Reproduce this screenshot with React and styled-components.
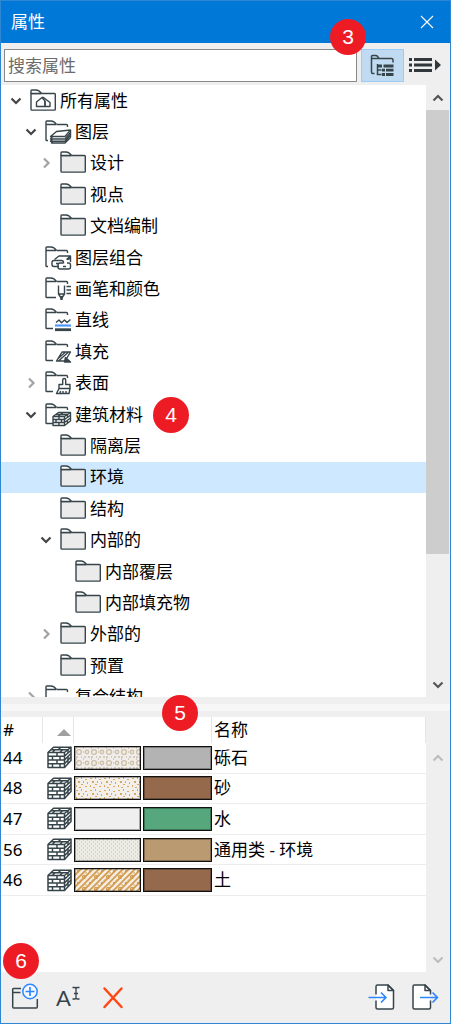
import { useState } from 'react';
import styled, { createGlobalStyle, css } from 'styled-components';

const INK = '#37454b';
const BLUE = '#2f86ff';

const GlobalStyle = createGlobalStyle`
  * {
    box-sizing: border-box;
  }

  body {
    margin: 0;
    color: #000;
    font-family: 'Noto Sans', 'Noto Sans CJK SC', sans-serif;
    font-size: 17px;
    line-height: 24px;
  }

  button, input {
    font: inherit;
    color: inherit;
  }

  svg {
    display: block;
    flex: none;
  }
`;

const Window = styled.main`
  display: flex;
  flex-direction: column;
  min-height: 100vh;
  background: #efefef;
  border: 1px solid #2f86d3;
`;

const TitleBar = styled.header`
  display: flex;
  align-items: center;
  justify-content: space-between;
  height: 42px;
  padding: 0 8px 0 10px;
  background: #0078d7;
  color: #fff;
`;

const Title = styled.h1`
  margin: 0;
  font-size: 17px;
  font-weight: 400;
`;

const IconButton = styled.button`
  display: flex;
  align-items: center;
  justify-content: center;
  flex: none;
  width: ${props => props.$width || 30}px;
  height: 33px;
  padding: 0;
  border: 1px solid ${props => props.$active ? '#99cdf6' : 'transparent'};
  background: ${props => props.$active ? '#c0dbf1' : 'transparent'};
`;

const Toolbar = styled.div`
  position: relative;
  display: flex;
  align-items: center;
  gap: 4px;
  height: 42px;
  padding: 2px 8px 0 3px;
`;

const SearchInput = styled.input`
  flex: 1;
  min-width: 0;
  height: 33px;
  padding: 0 3px;
  border: 1px solid #8a8a8a;
  background: #fff;
  outline: 0;

  &::placeholder {
    color: #6b6b6b;
    opacity: 1;
  }
`;

const Badge = styled.span`
  display: flex;
  align-items: center;
  justify-content: center;
  width: 36px;
  height: 36px;
  margin: ${props => props.$over ? '0' : '-6px 0'};
  border-radius: 50%;
  background: #ed1c24;
  color: #fff;
  font-family: 'Liberation Sans', Arial, sans-serif;
  font-size: 21px;
  z-index: 2;
  ${props => props.$over && css`
    position: absolute;
    left: ${props.$left || 'auto'};
    right: ${props.$right || 'auto'};
    top: ${props.$top};
  `}
`;

const Pane = styled.section`
  display: flex;
  flex: ${props => props.$grow} 1 0;
  min-height: 0;
`;

const PaneBody = styled.div`
  flex: 1;
  min-width: 0;
  height: 0;
  min-height: 100%;
  overflow: hidden;
  background: #fff;
`;

const Tree = styled.ul`
  display: grid;
  grid-auto-rows: 1fr;
  min-height: 628px;
  margin: 0;
  padding: 0;
  list-style: none;
`;

const TreeRow = styled.li`
  display: flex;
  align-items: center;
  padding-left: ${props => 9 + props.$depth * 15}px;
  background: ${props => props.$selected ? '#cde8ff' : 'transparent'};
  white-space: nowrap;
`;

const Expander = styled.button`
  display: flex;
  justify-content: center;
  width: 12px;
  margin-right: 8px;
  padding: 0;
  border: 0;
  background: none;
`;

const ExpanderSpace = styled.span`
  width: 20px;
`;

const TreeLabel = styled.span`
  margin: 0 10px 0 3px;
`;

const ScrollTrack = styled.div`
  display: flex;
  flex-direction: column;
  width: 24px;
  padding-right: 1px;
  padding-top: ${props => props.$offset || 0}px;
`;

const ScrollButton = styled.button`
  display: flex;
  align-items: center;
  justify-content: center;
  height: 25px;
  padding: 0;
  border: 0;
  background: none;
`;

const ScrollRoom = styled.div`
  display: flex;
  flex-direction: column;
  flex: 1;
`;

const Thumb = styled.div`
  height: 79%;
  background: #cdcdcd;
`;

const Splitter = styled.div`
  position: relative;
  height: 20px;
  border: solid #efefef;
  border-width: 7px 0 6px;
  background: #f7f7f7;
`;

const Table = styled.table`
  width: 100%;
  height: 179px;
  table-layout: fixed;
  border-collapse: separate;
  border-spacing: 0;
  white-space: nowrap;
`;

const HeadCell = styled.th`
  width: ${props => props.$width || 'auto'};
  height: 26px;
  padding: 0 2px;
  border-right: 1px solid #e5e5e5;
  font-weight: 400;
  text-align: left;
`;

const SortArrow = styled.span`
  display: block;
  width: 0;
  margin: 4px 0 0 auto;
  border: solid transparent;
  border-width: 0 7px 7px;
  border-bottom-color: #a0a0a0;
`;

const Cell = styled.td`
  height: 30px;
  padding: 0 ${props => props.$flush ? 0 : 2}px;
  border-bottom: 1px solid #ededed;
`;

const CellIcon = styled.div`
  display: flex;
  justify-content: flex-end;
  padding-right: 2px;
`;

const Swatches = styled.div`
  display: flex;
  gap: 2px;
`;

const Swatch = styled.div`
  flex: ${props => props.$grow} 1 0;
  height: 24px;
  border: 1px solid #111;
  outline: 1px solid rgba(0, 0, 0, 0.3);
  outline-offset: -2px;
  background: ${props => props.$color};
`;

const Footer = styled.footer`
  position: relative;
  display: flex;
  align-items: center;
  gap: 14px;
  height: 51px;
  padding: 0 10px 2px 9px;
`;

const Spacer = styled.div`
  flex: 1;
`;

const Chevron = ({ direction = 'down', color = '#444' }) => {
  const paths = {
    down: 'M1.5 3.5 6 8 10.5 3.5',
    up: 'M1.5 8.5 6 4 10.5 8.5',
    right: 'M4 1.5 8.5 6 4 10.5',
  };
  return (
    <svg width="12" height="12" viewBox="0 0 12 12" fill="none" stroke={color} strokeWidth="2.2">
      <path d={paths[direction]} />
    </svg>
  );
};

const marks = {
  home: (
    <>
      <path d="M6.5 17.500V13L12 8.500 15 12v5.500z" fill="#fff" />
      <path d="M12 8.500h1.500L20 13.500v4h-5M15 12v5.500" />
    </>
  ),
  layers: (
    <>
      <path d="M11.500 11.500 25.500 10 20 16.500H5.500z" fill="#fff" />
      <path d="M7.500 16.500 5.500 19H20l5.500-6.500M7.500 19l-2 2.200H20l5.500-6.200M7.500 21.500l-1 1.500H20l5.500-5.500M25.500 10v7.500" />
    </>
  ),
  combo: (
    <>
      <path d="M9.500 13.500 14 10h11.500l-4 3.500M25.500 10v6M22 13.500l3-1" />
      <path d="M14 20.500H9q-2 0-2-2v-2q0-2 2-2h7.500q2 0 2 2v1" />
      <path d="M18 17H15q-2 0-2 2v2q0 2 2 2h8.500q2 0 2-2v-2q0-2-2-2H22M11 17.500h2M18 20.500h3" />
    </>
  ),
  pen: (
    <>
      <path d="M13.500 8.500v8.500l3 4.500 3-4.500V8.500M14 17h5" />
      <path d="M16.500 19v4" strokeWidth="2.400" />
      <path d="M21.500 9.500H26M21.500 13H26M21.500 16.500H26" />
    </>
  ),
  line: (
    <>
      <path d="M11 14.500 14 12l2.500 2.800L19.500 12l2.500 2.500 3.500-3" />
      <path d="M10 17.500h16" stroke="#4c98ff" strokeWidth="2.200" />
      <path d="M10 21.700h16" strokeWidth="2.800" />
    </>
  ),
  fill: (
    <>
      <path d="M11.500 21 17 12h8.500L20 21zM13.500 21l10-9M12 19.500l8.500-7.500" />
      <path d="m20.500 17.500 5 4.500h-6z" fill={INK} />
    </>
  ),
  brush: (
    <>
      <path d="M17.700 13.500V9q0-1.500 1.500-1.500T20.700 9v4.500H25v4H14v-4z" />
      <path d="m14 17.500-2.500 5H24l1-5M14.800 22.500l.8-2.500M18 22.500V20M21 22.500V20" />
    </>
  ),
  bricks: (
    <>
      <path d="m8 13.500 5.500-4h12v8.500l-6 4.500H8z" fill="#fff" />
      <path d="M8 13.500h11.500l6-4M19.500 13.500v9M8 16.500h11.500l6-4.300M8 19.500h11.500l6-4.500M14 13.500v3M11 16.500v3M16.500 16.500v3M14 19.500v3M11 11.500h11.500M18 9.500l-5 4M22.500 11.500v3M22.500 17v3" />
    </>
  ),
};

const FolderIcon = ({ mark }) => {
  const isClosed = !mark || mark === 'home';
  return (
    <svg width="27" height="24" viewBox="0 0 27 24" fill="none" stroke={INK} strokeWidth="1.4" strokeLinejoin="round">
      {isClosed
        ? <path d="M1 4.500h23.500q.8 0 .8.800v15q0 .8-.8.800H1.800q-.8 0-.8-.8z" fill={mark ? '#fff' : '#ebebeb'} />
        : <path d={`M${mark === 'pen' ? 11 : mark === 'layers' || mark === 'combo' ? 3 : 8} 20.500H1.800Q1 20.500 1 19.700V4.500M11.500 4.500H21.500q1 0 1 1V7`} />}
      <path d="M1 4.700V1.800Q1 1 1.800 1H6c2.200 0 3.800 1 5.500 3.500M1 4.500h10" fill={isClosed ? '#fff' : 'none'} />
      {marks[mark]}
    </svg>
  );
};

const BrickIcon = () => (
  <svg width="25" height="23" viewBox="0 0 25 23" fill="none" stroke={INK} strokeWidth="1.5" strokeLinejoin="round">
    <path d="M1 6.500 6.500 1.200H24v13.300L17.500 21.500H1z" fill="#fff" />
    <path d="M1 6.500h16.500L24 1.200M17.500 6.500v15M1 10.200h16.500l6.500-6M1 14h16.500L24 7.500M1 17.700h16.500L24 11" />
    <path d="M10 6.500v3.700M5.500 10.200V14M13 10.200V14M10 14v3.700M5.500 17.700v3.800M13 17.700v3.800M4 3.800h17M14 1.200l-3 2.600M8 3.800 5.500 6.500M15.500 3.800 13 6.500M21 3.800V7M21 10.500V14M21 14.500v3" />
  </svg>
);

const TreeModeIcon = () => (
  <svg width="25" height="23" viewBox="0 0 25 23" fill="none" stroke={INK} strokeWidth="1.5">
    <path d="M4.500 19.500H2.800Q1.500 19.500 1.500 18V2.500q0-1 1-1H6q1.500 0 3 3h12.500q1.500 0 1.500 1.500v2.500M1.500 4.500H9" />
    <path d="M7.500 10v10.500h4M7.500 16h4" />
    <path d="M7 12h5M13.500 12h10M12 16.200h3M16 16.200h7.500M12 20.500h3M16 20.500h7.500" strokeWidth="2.800" />
  </svg>
);

const ListMenuIcon = () => (
  <svg width="32" height="16" viewBox="0 0 32 16" fill="#30383b">
    <path d="M0 1h3v3H0zM5 1h18v3H5zM0 6.500h3v3H0zM5 6.500h18v3H5zM0 12h3v3H0zM5 12h18v3H5zM26 2.500 32 8l-6 5.500z" />
  </svg>
);

const CloseIcon = () => (
  <svg width="14" height="14" viewBox="0 0 14 14" stroke="#fff" strokeWidth="1.1">
    <path d="m1 1 12 12M13 1 1 13" />
  </svg>
);

const NewFolderIcon = () => (
  <svg width="28" height="28" viewBox="0 0 28 28" fill="none" stroke={INK} strokeWidth="1.5">
    <path d="M10 5.500H2.500q-.8 0-.8.800V24q0 1 1 1h22.600q1 0 1-1v-8M2 9.500h7.500" />
    <circle cx="19" cy="8.500" r="7.200" fill="#f5faff" stroke={BLUE} />
    <path d="M19 4v9M14.500 8.500h9" stroke={BLUE} strokeWidth="1.7" />
  </svg>
);

const RenameIcon = () => (
  <svg width="28" height="28" viewBox="0 0 28 28" fill="none" stroke={INK} strokeWidth="1.3">
    <text x="1" y="23" fill={INK} stroke="none" fontFamily="Lato, sans-serif" fontSize="22">A</text>
    <path d="M17.500 4.500h2.500l1 1 1-1h2.500M21 5.500v10M17.500 16h2.500l1-1 1 1h2.500M19 10.500h4" />
  </svg>
);

const DeleteIcon = () => (
  <svg width="28" height="28" viewBox="0 0 28 28" stroke="#ff4716" strokeWidth="2.5" strokeLinecap="round">
    <path d="m5.500 5.500 17 18.500M22.500 5.500 5.500 24" />
  </svg>
);

const ImportIcon = () => (
  <svg width="28" height="28" viewBox="0 0 28 28" fill="none" stroke={INK} strokeWidth="1.5" strokeLinejoin="round">
    <path d="M9 11.500V3.500q0-1.500 1.500-1.500h10.500l5.500 5.500v17q0 1.500-1.500 1.500H10.500Q9 26 9 24.500v-7" fill="#fff" />
    <path d="M21 2v5.500h5.500z" />
    <path d="M1.500 14.500h17M14 9.500l5 5-5 5" stroke={BLUE} strokeWidth="1.7" />
  </svg>
);

const ExportIcon = () => (
  <svg width="28" height="28" viewBox="0 0 28 28" fill="none" stroke={INK} strokeWidth="1.5" strokeLinejoin="round">
    <path d="M19.500 17.500v7q0 1.500-1.500 1.500H3.500Q2 26 2 24.500v-21Q2 2 3.500 2h10.500l5.500 5.500v4" fill="#fff" />
    <path d="M14 2v5.500h5.500z" />
    <path d="M9 14.500h17M21.500 9.500l5 5-5 5" stroke={BLUE} strokeWidth="1.7" />
  </svg>
);

const hatches = {
  gravel: (
    <pattern id="gravel" width="15" height="11" patternUnits="userSpaceOnUse">
      <g fill="none" stroke="#cfc0a8" strokeWidth="1.400">
        <circle cx="4" cy="5" r="2.400" />
        <circle cx="12" cy="5" r="1.700" />
        <path d="M1 10h2M6 10h1M9 10h2M13 10h2M8 1h1M8 5h1M1 1h1" />
      </g>
    </pattern>
  ),
  sand: (
    <pattern id="sand" width="14" height="12" patternUnits="userSpaceOnUse">
      <path
        d="M1 1h2v1H1zM6 0h1v2H6zM10 2h2v1h-2zM3 4h2v2H3zM8 4h1v2H8zM12 5h1v2h-1zM6 7h2v1H6zM1 8h1v2H1zM10 9h2v1h-2zM4 10h2v1H4z"
        fill="#dca75f"
      />
    </pattern>
  ),
  fine: (
    <pattern id="fine" width="4" height="4" patternUnits="userSpaceOnUse">
      <path d="M0 0h1v2H0zM2 2h1v2H2z" fill="#d9d9bd" />
    </pattern>
  ),
  soil: (
    <pattern id="soil" width="12" height="12" patternUnits="userSpaceOnUse">
      <path d="M-1 13 13-1M-1 1 1-1M11 13l2-2M2 16 16 2M-4 10 10-4" stroke="#d39a4e" strokeWidth="1.600" />
      <circle cx="9" cy="8" r="1.500" fill="none" stroke="#d39a4e" strokeWidth="1.300" />
      <circle cx="3" cy="2" r="1.200" fill="#d39a4e" />
      <path d="M4 12h2v-2M11 5V3" fill="none" stroke="#d9a35b" />
    </pattern>
  ),
};

const Hatch = ({ kind }) => (
  <svg width="100%" height="100%">
    <defs>{hatches[kind]}</defs>
    <rect width="100%" height="100%" fill={`url(#${kind})`} />
  </svg>
);

const nodes = [
  { name: '所有属性', depth: 0, mark: 'home', state: 'open' },
  { name: '图层', depth: 1, mark: 'layers', state: 'open' },
  { name: '设计', depth: 2, state: 'closed' },
  { name: '视点', depth: 2 },
  { name: '文档编制', depth: 2 },
  { name: '图层组合', depth: 1, mark: 'combo' },
  { name: '画笔和颜色', depth: 1, mark: 'pen' },
  { name: '直线', depth: 1, mark: 'line' },
  { name: '填充', depth: 1, mark: 'fill' },
  { name: '表面', depth: 1, mark: 'brush', state: 'closed' },
  { name: '建筑材料', depth: 1, mark: 'bricks', state: 'open', badge: 4 },
  { name: '隔离层', depth: 2 },
  { name: '环境', depth: 2 },
  { name: '结构', depth: 2 },
  { name: '内部的', depth: 2, state: 'open' },
  { name: '内部覆层', depth: 3 },
  { name: '内部填充物', depth: 3 },
  { name: '外部的', depth: 2, state: 'closed' },
  { name: '预置', depth: 2 },
  { name: '复合结构', depth: 1, mark: 'composite', state: 'closed' },
];

const materials = [
  { id: 44, name: '砾石', hatch: 'gravel', back: '#f0eeec', color: '#b3b3b3' },
  { id: 48, name: '砂', hatch: 'sand', back: '#f3f0ec', color: '#95694c' },
  { id: 47, name: '水', back: '#efefef', color: '#56a77b' },
  { id: 56, name: '通用类 - 环境', hatch: 'fine', back: '#ecece4', color: '#ba9a70' },
  { id: 46, name: '土', hatch: 'soil', back: '#f3ecdf', color: '#95694c' },
];

const Scrollbar = ({ color, offset, children }) => (
  <ScrollTrack $offset={offset}>
    <ScrollButton type="button" aria-label="向上滚动"><Chevron direction="up" color={color} /></ScrollButton>
    <ScrollRoom>{children}</ScrollRoom>
    <ScrollButton type="button" aria-label="向下滚动"><Chevron color={color} /></ScrollButton>
  </ScrollTrack>
);

const TreeNode = ({ node, selected, onSelect }) => (
  <TreeRow
    role="treeitem"
    aria-level={node.depth + 1}
    aria-selected={selected}
    $depth={node.depth}
    $selected={selected}
    onClick={() => onSelect(node.name)}
  >
    {node.state
      ? (
        <Expander type="button" aria-label={node.name}>
          {node.state === 'open' ? <Chevron /> : <Chevron direction="right" color="#a3a3a3" />}
        </Expander>
      )
      : <ExpanderSpace />}
    <FolderIcon mark={node.mark} />
    <TreeLabel>{node.name}</TreeLabel>
    {node.badge && <Badge>{node.badge}</Badge>}
  </TreeRow>
);

const App = () => {
  const [selected, setSelected] = useState('环境');
  const [query, setQuery] = useState('');

  return (
    <>
      <GlobalStyle />
      <Window>
        <TitleBar>
          <Title>属性</Title>
          <IconButton type="button" aria-label="关闭"><CloseIcon /></IconButton>
        </TitleBar>

        <Toolbar>
          <SearchInput
            type="text"
            aria-label="搜索属性"
            placeholder="搜索属性"
            value={query}
            onChange={e => setQuery(e.target.value)}
          />
          <IconButton type="button" aria-label="文件夹视图" $width={43} $active><TreeModeIcon /></IconButton>
          <IconButton type="button" aria-label="选项" $width={34}><ListMenuIcon /></IconButton>
          <Badge $over $right="84px" $top="-24px">3</Badge>
        </Toolbar>

        <Pane $grow={12}>
          <PaneBody>
            <Tree role="tree">
              {nodes.map(node => (
                <TreeNode
                  key={node.name}
                  node={node}
                  selected={node.name === selected}
                  onSelect={setSelected}
                />
              ))}
            </Tree>
          </PaneBody>
          <Scrollbar color="#555"><Thumb /></Scrollbar>
        </Pane>

        <Splitter>
          <Badge $over $left="161px" $top="-9px">5</Badge>
        </Splitter>

        <Pane $grow={5}>
          <PaneBody>
            <Table>
              <thead>
                <tr>
                  <HeadCell $width="42px">#</HeadCell>
                  <HeadCell $width="31px"><SortArrow /></HeadCell>
                  <HeadCell $width="138px" aria-label="颜色" />
                  <HeadCell>名称</HeadCell>
                </tr>
              </thead>
              <tbody>
                {materials.map(el => (
                  <tr key={el.id}>
                    <Cell>{el.id}</Cell>
                    <Cell $flush><CellIcon><BrickIcon /></CellIcon></Cell>
                    <Cell $flush>
                      <Swatches>
                        <Swatch $grow={67} $color={el.back}>{el.hatch && <Hatch kind={el.hatch} />}</Swatch>
                        <Swatch $grow={69} $color={el.color} />
                      </Swatches>
                    </Cell>
                    <Cell>{el.name}</Cell>
                  </tr>
                ))}
              </tbody>
            </Table>
          </PaneBody>
          <Scrollbar color="#bdbdbd" offset={28} />
        </Pane>

        <Footer>
          <Badge $over $left="2px" $top="-29px">6</Badge>
          <IconButton type="button" aria-label="新建文件夹"><NewFolderIcon /></IconButton>
          <IconButton type="button" aria-label="重命名"><RenameIcon /></IconButton>
          <IconButton type="button" aria-label="删除"><DeleteIcon /></IconButton>
          <Spacer />
          <IconButton type="button" aria-label="导入"><ImportIcon /></IconButton>
          <IconButton type="button" aria-label="导出"><ExportIcon /></IconButton>
        </Footer>
      </Window>
    </>
  );
};

export default App;
